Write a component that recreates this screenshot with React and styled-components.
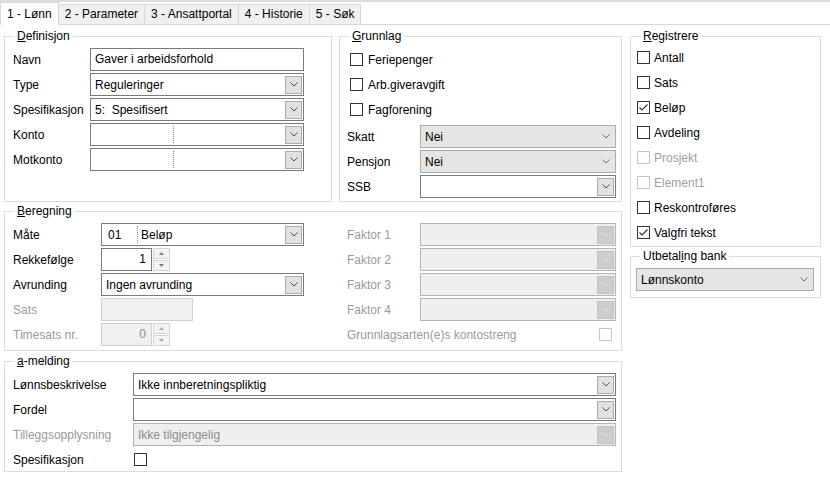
import React from "react";
import styled, { createGlobalStyle } from "styled-components";

const GlobalStyle = createGlobalStyle`
  html, body {
    margin: 0;
    padding: 0;
    background: #fff;
  }
  body {
    font-family: "Liberation Sans", Arial, sans-serif;
    font-size: 12px;
    color: #000;
  }
`;

const Page = styled.div`
  width: 830px;
  height: 485px;
  overflow: hidden;
  background: #fff;
`;

const TabStrip = styled.div`
  display: flex;
  align-items: flex-end;
  height: 25px;
  box-sizing: border-box;
  border-top: 2px solid #dcdcdc;
  border-bottom: 1px solid #d9d9d9;
`;

const Tab = styled.div`
  box-sizing: border-box;
  height: ${(p) => (p.$active ? "23px" : "20px")};
  margin-bottom: ${(p) => (p.$active ? "-1px" : "0")};
  margin-left: ${(p) => (p.$first ? "0" : "-1px")};
  padding: ${(p) => (p.$active ? "2px 6px 0" : "0 6px")};
  line-height: 19px;
  border: 1px solid #d9d9d9;
  border-bottom: ${(p) => (p.$active ? "none" : "none")};
  background: ${(p) => (p.$active ? "#fff" : "#f0f0f0")};
  white-space: nowrap;
  position: relative;
  z-index: ${(p) => (p.$active ? 1 : 0)};
`;

const Body = styled.div`
  display: grid;
  grid-template-columns: 618px 191px;
  column-gap: 8px;
  padding: 11px 0 0 4px;
  align-items: start;
`;

const Column = styled.div`
  display: flex;
  flex-direction: column;
`;

const TopRow = styled.div`
  display: grid;
  grid-template-columns: 328px 283px;
  column-gap: 7px;
`;

const Group = styled.div`
  position: relative;
  box-sizing: border-box;
  border: 1px solid #dcdcdc;
  margin-top: ${(p) => p.$mt || 0}px;
  padding: ${(p) => p.$pad};
`;

const Legend = styled.span`
  position: absolute;
  top: -8px;
  left: 9px;
  padding: 0 3px;
  line-height: 14px;
  background: #fff;
  white-space: nowrap;
`;

const Rows = styled.div`
  display: flex;
  flex-direction: column;
  gap: 2px;
  margin-top: ${(p) => p.$mt || 0}px;
`;

const FieldRow = styled.div`
  display: grid;
  grid-template-columns: ${(p) => p.$label}px auto;
  align-items: center;
  height: 23px;
`;

const Label = styled.span`
  color: ${(p) => (p.$disabled ? "#9a9a9a" : "#000")};
  white-space: nowrap;
`;

const ComboBox = styled.div`
  display: flex;
  align-items: center;
  box-sizing: border-box;
  width: ${(p) => p.$w}px;
  height: 23px;
  padding: 0 ${(p) => (p.$variant === "gray" ? "5px" : "1px")} 0 4px;
  border: 1px solid
    ${(p) =>
      p.$variant === "white"
        ? "#7a7a7a"
        : p.$variant === "gray"
        ? "#acacac"
        : "#b4b4b4"};
  background: ${(p) =>
    p.$variant === "white" ? "#fff" : p.$variant === "gray" ? "#e5e5e5" : "#efefef"};
  color: ${(p) => (p.$variant === "disabled" ? "#8c8c8c" : "#000")};
`;

const ComboText = styled.span`
  flex: 1;
  display: flex;
  align-items: center;
  height: 100%;
  white-space: nowrap;
  overflow: hidden;
`;

const CodeCell = styled.span`
  display: flex;
  align-items: center;
  box-sizing: border-box;
  width: ${(p) => p.$w}px;
  height: 17px;
  padding-left: ${(p) => p.$pl || 0}px;
  border-right: 1px dotted #8a8a8a;
`;

const NameCell = styled.span`
  padding-left: 3px;
`;

const DropButton = styled.span`
  display: flex;
  align-items: center;
  justify-content: center;
  box-sizing: border-box;
  width: 17px;
  height: 18px;
  border: 1px solid ${(p) => (p.$disabled ? "#c2c2c2" : "#acacac")};
  background: ${(p) => (p.$disabled ? "#cdcdcd" : "#e1e1e1")};
`;

const TextBox = styled.div`
  box-sizing: border-box;
  width: ${(p) => p.$w}px;
  height: 23px;
  line-height: 21px;
  padding-left: 4px;
  border: 1px solid ${(p) => (p.$disabled ? "#cfcfcf" : "#7a7a7a")};
  background: ${(p) => (p.$disabled ? "#f0f0f0" : "#fff")};
`;

const SpinWrap = styled.div`
  display: flex;
  gap: 1px;
  height: 23px;
`;

const SpinField = styled.div`
  box-sizing: border-box;
  width: 51px;
  height: 23px;
  line-height: 21px;
  padding-right: 5px;
  text-align: right;
  border: 1px solid ${(p) => (p.$disabled ? "#cfcfcf" : "#7a7a7a")};
  background: ${(p) => (p.$disabled ? "#f0f0f0" : "#fff")};
  color: ${(p) => (p.$disabled ? "#8c8c8c" : "#000")};
`;

const SpinButtons = styled.div`
  display: flex;
  flex-direction: column;
  gap: 1px;
  width: 17px;
`;

const SpinBtn = styled.span`
  flex: 1;
  display: flex;
  align-items: center;
  justify-content: center;
  border: 1px solid #d6d6d6;
  background: #f3f3f3;
`;

const CheckRow = styled.div`
  display: flex;
  align-items: center;
  gap: ${(p) => p.$gap || 4}px;
  height: 23px;
  margin-left: ${(p) => p.$indent || 0}px;
  color: ${(p) => (p.$disabled ? "#a0a0a0" : "#000")};
`;

const Box = styled.span`
  display: flex;
  align-items: center;
  justify-content: center;
  box-sizing: border-box;
  width: 13px;
  height: 13px;
  border: 1px solid ${(p) => (p.$disabled ? "#c6c6c6" : "#333")};
  background: #fff;
  flex-shrink: 0;
`;

const SplitRow = styled.div`
  display: flex;
  align-items: center;
  justify-content: space-between;
  height: 23px;
  padding-right: 4px;
`;

const BeregningGrid = styled.div`
  display: grid;
  grid-template-columns: 334px 1fr;
`;

const Chevron = ({ color = "#4d4d4d" }) => (
  <svg width="8" height="5" viewBox="0 0 8 5">
    <polyline points="0.5,0.5 4,4 7.5,0.5" fill="none" stroke={color} strokeWidth="1" />
  </svg>
);

const Arrow = ({ up, color = "#7d7d7d" }) => (
  <svg width="5" height="3" viewBox="0 0 5 3">
    <polygon points={up ? "2.5,0 5,3 0,3" : "0,0 5,0 2.5,3"} fill={color} />
  </svg>
);

const Combo = ({ w, variant = "white", children }) => (
  <ComboBox $w={w} $variant={variant}>
    <ComboText>{children}</ComboText>
    {variant === "gray" ? (
      <Chevron color="#6e6e6e" />
    ) : (
      <DropButton $disabled={variant === "disabled"}>
        <Chevron color={variant === "disabled" ? "#e4e4e4" : "#4d4d4d"} />
      </DropButton>
    )}
  </ComboBox>
);

const Spinner = ({ value, disabled }) => (
  <SpinWrap>
    <SpinField $disabled={disabled}>{value}</SpinField>
    <SpinButtons>
      <SpinBtn>
        <Arrow up color={disabled ? "#a8a8a8" : "#7d7d7d"} />
      </SpinBtn>
      <SpinBtn>
        <Arrow color={disabled ? "#a8a8a8" : "#7d7d7d"} />
      </SpinBtn>
    </SpinButtons>
  </SpinWrap>
);

const Check = ({ label, checked, disabled, indent, gap }) => (
  <CheckRow $disabled={disabled} $indent={indent} $gap={gap}>
    <Box $disabled={disabled}>
      {checked && (
        <svg width="11" height="11" viewBox="0 0 11 11">
          <polyline points="1.5,5.5 4,8 9.5,2.5" fill="none" stroke="#333" strokeWidth="1.2" />
        </svg>
      )}
    </Box>
    {label}
  </CheckRow>
);

const tabs = ["1 - Lønn", "2 - Parameter", "3 - Ansattportal", "4 - Historie", "5 - Søk"];

const registrere = [
  { label: "Antall" },
  { label: "Sats" },
  { label: "Beløp", checked: true },
  { label: "Avdeling" },
  { label: "Prosjekt", disabled: true },
  { label: "Element1", disabled: true },
  { label: "Reskontroføres" },
  { label: "Valgfri tekst", checked: true },
];

export default function App() {
  return (
    <Page>
      <GlobalStyle />
      <TabStrip>
        {tabs.map((t, i) => (
          <Tab key={t} $active={i === 0} $first={i === 0}>
            {t}
          </Tab>
        ))}
      </TabStrip>
      <Body>
        <Column>
          <TopRow>
            <Group $pad="11px 5px 4px 8px">
              <Legend>
                <u>D</u>efinisjon
              </Legend>
              <Rows>
                <FieldRow $label={77}>
                  <Label>Navn</Label>
                  <TextBox $w={214}>Gaver i arbeidsforhold</TextBox>
                </FieldRow>
                <FieldRow $label={77}>
                  <Label>Type</Label>
                  <Combo w={214}>Reguleringer</Combo>
                </FieldRow>
                <FieldRow $label={77}>
                  <Label>Spesifikasjon</Label>
                  <Combo w={214}>5:&nbsp; Spesifisert</Combo>
                </FieldRow>
                <FieldRow $label={77}>
                  <Label>Konto</Label>
                  <Combo w={214}>
                    <CodeCell $w={79} />
                  </Combo>
                </FieldRow>
                <FieldRow $label={77}>
                  <Label>Motkonto</Label>
                  <Combo w={214}>
                    <CodeCell $w={79} />
                  </Combo>
                </FieldRow>
              </Rows>
            </Group>
            <Group $pad="11px 5px 3px 7px">
              <Legend>
                <u>G</u>runnlag
              </Legend>
              <Rows>
                <Check label="Feriepenger" indent={3} gap={5} />
                <Check label="Arb.giveravgift" indent={3} gap={5} />
                <Check label="Fagforening" indent={3} gap={5} />
              </Rows>
              <Rows $mt={4}>
                <FieldRow $label={73}>
                  <Label>Skatt</Label>
                  <Combo w={196} variant="gray">Nei</Combo>
                </FieldRow>
                <FieldRow $label={73}>
                  <Label>Pensjon</Label>
                  <Combo w={196} variant="gray">Nei</Combo>
                </FieldRow>
                <FieldRow $label={73}>
                  <Label>SSB</Label>
                  <Combo w={196} />
                </FieldRow>
              </Rows>
            </Group>
          </TopRow>

          <Group $mt={9} $pad="11px 5px 4px 8px">
            <Legend>
              <u>B</u>eregning
            </Legend>
            <BeregningGrid>
              <Rows>
                <FieldRow $label={88}>
                  <Label>Måte</Label>
                  <Combo w={203}>
                    <CodeCell $w={32} $pl={2}>01</CodeCell>
                    <NameCell>Beløp</NameCell>
                  </Combo>
                </FieldRow>
                <FieldRow $label={88}>
                  <Label>Rekkefølge</Label>
                  <Spinner value="1" />
                </FieldRow>
                <FieldRow $label={88}>
                  <Label>Avrunding</Label>
                  <Combo w={203}>Ingen avrunding</Combo>
                </FieldRow>
                <FieldRow $label={88}>
                  <Label $disabled>Sats</Label>
                  <TextBox $w={92} $disabled />
                </FieldRow>
                <FieldRow $label={88}>
                  <Label $disabled>Timesats nr.</Label>
                  <Spinner value="0" disabled />
                </FieldRow>
              </Rows>
              <Rows>
                {[1, 2, 3, 4].map((n) => (
                  <FieldRow key={n} $label={73}>
                    <Label $disabled>Faktor {n}</Label>
                    <Combo w={196} variant="disabled" />
                  </FieldRow>
                ))}
                <SplitRow>
                  <Label $disabled>Grunnlagsarten(e)s kontostreng</Label>
                  <Box $disabled />
                </SplitRow>
              </Rows>
            </BeregningGrid>
          </Group>

          <Group $mt={10} $pad="11px 5px 0 8px">
            <Legend>
              <u>a</u>-melding
            </Legend>
            <Rows>
              <FieldRow $label={120}>
                <Label>Lønnsbeskrivelse</Label>
                <Combo w={483}>Ikke innberetningspliktig</Combo>
              </FieldRow>
              <FieldRow $label={120}>
                <Label>Fordel</Label>
                <Combo w={483} />
              </FieldRow>
              <FieldRow $label={120}>
                <Label $disabled>Tilleggsopplysning</Label>
                <Combo w={483} variant="disabled">
                  Ikke tilgjengelig
                </Combo>
              </FieldRow>
              <FieldRow $label={121}>
                <Label>Spesifikasjon</Label>
                <Box />
              </FieldRow>
            </Rows>
          </Group>
        </Column>

        <Column>
          <Group $pad="9px 5px 2px 6px">
            <Legend>
              <u>R</u>egistrere
            </Legend>
            <Rows>
              {registrere.map((r) => (
                <Check key={r.label} {...r} />
              ))}
            </Rows>
          </Group>
          <Group $mt={9} $pad="11px 6px 6px 5px">
            <Legend>
              Utbetal<u>i</u>ng bank
            </Legend>
            <Combo w={178} variant="gray">Lønnskonto</Combo>
          </Group>
        </Column>
      </Body>
    </Page>
  );
}
